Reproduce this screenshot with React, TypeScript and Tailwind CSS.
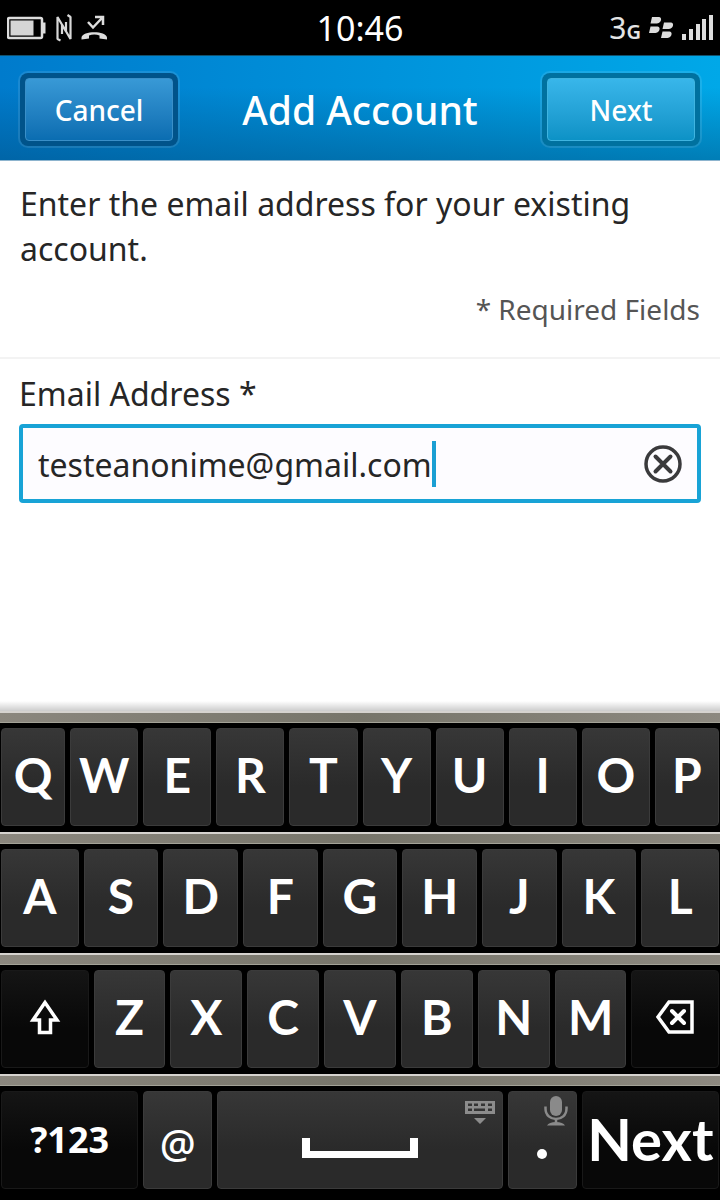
import React, { useState } from "react";
import clsx from "clsx";

const Battery = () => (
  <svg width="40" height="24" viewBox="0 0 40 24" aria-label="Battery">
    <rect x="1" y="2" width="34" height="20" rx="1.500" fill="none" stroke="#ddd" strokeWidth="2.500" />
    <rect x="3.500" y="4.500" width="23" height="15" fill="#d6d6d6" />
    <path d="M36 6.500h2.500v11H36z" fill="#ddd" />
  </svg>
);

const Nfc = () => (
  <svg width="16" height="28" viewBox="0 0 16 28" aria-label="NFC">
    <path
      d="M4.500 26.500L1.500 25V3L10 17.500V8M11.500 1L14.500 3V25L6 10.500V20"
      fill="none"
      stroke="#d8d8d8"
      strokeWidth="2.200"
      strokeLinejoin="bevel"
    />
  </svg>
);

const MissedCall = () => (
  <svg width="27" height="26" viewBox="0 0 27 26" aria-label="Missed call">
    <path d="M7 7l5 5.500L21 3M14 2h8v8" fill="none" stroke="#ddd" strokeWidth="2.500" />
    <path
      d="M.5 24.500V22.500C1.500 15.500 25 15.500 26 22.500v2L18.500 23.500v-3c-3-1.500-7.500-1.500-10.500 0v3z"
      fill="#ddd"
    />
  </svg>
);

const BlackBerry = () => (
  <svg width="25" height="24" viewBox="0 0 25 24" fill="#ddd" aria-label="BlackBerry">
    <path d="M3 1h7c3.500 0 2.500 6.500-2 6.500H1.500zM1.500 10.500h7c3.500 0 2.500 6.500-2 6.500H0zM15 6.500h7c3.500 0 2.500 6.500-2 6.500h-6.500zM13.500 15.500h7c3.500 0 2.500 6.500-2 6.500H12z" />
  </svg>
);

const Signal = () => (
  <svg width="31" height="25" viewBox="0 0 31 25" fill="#ddd" aria-label="Signal">
    <rect x="0" y="19" width="4" height="6" />
    <rect x="7" y="14" width="4" height="11" />
    <rect x="14" y="9" width="4" height="16" />
    <rect x="20" y="4" width="4" height="21" />
    <rect x="27" y="0" width="4" height="25" />
  </svg>
);

const StatusBar = () => (
  <div className="grid h-14 grid-cols-3 items-center border-b border-[#12506c] bg-black px-[7px] text-[#e4e4e4]">
    <div className="flex items-center gap-[9px]">
      <Battery />
      <Nfc />
      <MissedCall />
    </div>
    <span className="text-center text-[34px] leading-none text-white">10:46</span>
    <div className="flex items-center justify-end gap-2">
      <span className="flex items-baseline leading-none">
        <span className="text-[30px] leading-none">3</span>
        <span className="text-[20px] leading-none font-semibold">G</span>
      </span>
      <BlackBerry />
      <Signal />
    </div>
  </div>
);

const HeaderButton = ({ label, light }: { label: string; light?: boolean }) => (
  <button
    type="button"
    className={clsx(
      "w-[158px] rounded-lg p-[5px] ring-2 ring-white/10",
      light ? "bg-[#00719f]" : "bg-[#00538a]"
    )}
  >
    <span
      className={clsx(
        "flex h-[63px] items-center justify-center rounded-sm border bg-linear-to-b text-[28px] font-medium text-white",
        light
          ? "border-[#3fb4e0] from-[#38b6ea] to-[#0c92c6]"
          : "border-[#3a8fc8] from-[#3899d6] to-[#0a6db1]"
      )}
    >
      {label}
    </span>
  </button>
);

const Header = () => (
  <header className="border-b border-[#8db4ce] bg-linear-to-r from-[#007bcc] to-[#00a8e8]">
    <div className="flex h-26 items-center justify-between bg-linear-to-b from-transparent from-30% to-[#004a7a]/45 px-5 pt-1 pb-px">
      <HeaderButton label="Cancel" />
      <h1 className="pt-0.5 text-[39px] font-medium text-white">Add Account</h1>
      <HeaderButton label="Next" light />
    </div>
  </header>
);

const AccountForm = () => {
  const [email, setEmail] = useState("testeanonime@gmail.com");

  return (
    <main className="min-h-[550px] bg-white text-[#262626]">
      <div className="border-b-2 border-[#f3f3f3] px-5 pt-5 pb-[25px]">
        <p className="max-w-[640px] text-[32px] leading-[45px]">
          Enter the email address for your existing account.
        </p>
        <p className="mt-4 text-right text-[28px] leading-[45px] text-[#555]">* Required Fields</p>
      </div>
      <div className="px-[19px] pt-3">
        <label htmlFor="email" className="block text-[32px] leading-[45px]">
          Email Address *
        </label>
        <div className="mt-2 flex h-[79px] items-center rounded-sm border-4 border-[#18a3d6] bg-[#fdfcff] px-[15px]">
          <input
            id="email"
            type="email"
            value={email}
            onChange={(e) => setEmail(e.target.value)}
            className="field-sizing-content pt-0.5 text-[32px] outline-none"
          />
          <span className="h-[46px] w-1 bg-[#1b9fd3]" />
          <button type="button" aria-label="Clear" onClick={() => setEmail("")} className="ml-auto">
            <svg width="38" height="38" viewBox="0 0 38 38" fill="none" stroke="#3a3a3c">
              <circle cx="19" cy="19" r="17" strokeWidth="3.500" />
              <path d="M11.500 11.500l15 15M26.500 11.500l-15 15" strokeWidth="4" strokeLinecap="round" />
            </svg>
          </button>
        </div>
      </div>
    </main>
  );
};

type KeyProps = {
  children: React.ReactNode;
  className?: string;
  dark?: boolean;
  label?: string;
};

const Key = ({ children, className, dark, label }: KeyProps) => (
  <button
    type="button"
    aria-label={label}
    className={clsx(
      "relative flex h-[98px] min-w-0 items-center justify-center rounded-sm border bg-linear-to-b font-bold text-white",
      dark
        ? "border-[#191919] from-[#151515] to-[#080808] to-60%"
        : "border-[#3b3b3b] from-[#373737] to-[#2a2a2a] to-60%",
      className
    )}
  >
    {children}
  </button>
);

const Row = ({ children }: { children: React.ReactNode }) => (
  <div>
    <div className="h-3 border-t-2 border-b border-t-[#d6d3cf] border-b-[#a3a297] bg-linear-to-r from-[#8b877e] via-[#77756a] to-[#8d8980]" />
    <div className="flex gap-[5px] px-px pt-[5px] pb-1.5">{children}</div>
  </div>
);

const Letters = ({ keys, size }: { keys: string; size: string }) => (
  <>
    {keys.split("").map((k) => (
      <Key key={k} className={clsx("pb-1 font-['Lato',sans-serif] text-[48px]", size)}>
        {k}
      </Key>
    ))}
  </>
);

const Keyboard = () => (
  <div className="bg-black pb-1">
    <Row>
      <Letters keys="Q" size="flex-64" />
      <Letters keys="WERTYUIO" size="flex-68" />
      <Letters keys="P" size="flex-64" />
    </Row>
    <Row>
      <Letters keys="A" size="flex-77" />
      <Letters keys="SDFGHJK" size="flex-74" />
      <Letters keys="L" size="flex-77" />
    </Row>
    <Row>
      <Key dark label="Shift" className="flex-87 pb-1">
        <svg width="32" height="36" viewBox="0 0 32 36" fill="none" stroke="white" strokeWidth="3.500">
          <path d="M16 3.500L4 21h6.500v12.500h11V21H28z" />
        </svg>
      </Key>
      <Letters keys="ZXCVBNM" size="flex-71" />
      <Key dark label="Backspace" className="flex-87 pb-1">
        <svg width="40" height="36" viewBox="0 0 40 36" fill="none" stroke="white" strokeWidth="3.500">
          <path d="M14 3h23v30H14L3 18z" />
          <path d="M17 12l12 12M29 12L17 24" strokeWidth="4" strokeLinecap="round" />
        </svg>
      </Key>
    </Row>
    <Row>
      <Key dark className="flex-137 text-[36px]">
        ?123
      </Key>
      <Key className="flex-68 pt-2 text-[40px] font-medium">@</Key>
      <Key label="Space" className="flex-287">
        <svg width="116" height="20" viewBox="0 0 116 20" className="mt-4">
          <path d="M0 0h8v13h100V0h8v20H0z" fill="white" />
        </svg>
        <svg width="32" height="24" viewBox="0 0 32 24" className="absolute top-2 right-1.5">
          <path
            fill="#8c8c8c"
            fillRule="evenodd"
            d="M1 1h30v13H1zM4 3.500v2.500h4V3.500zM10 3.500v2.500h4V3.500zM17 3.500v2.500h4V3.500zM24 3.500v2.500h4V3.500zM4 8.500V11h4V8.500zM10 8.500V11h11V8.500zM24 8.500V11h4V8.500zM10 18h12l-6 6z"
          />
        </svg>
      </Key>
      <Key label="Period" className="flex-68">
        <span className="mt-7 size-[10px] rounded-full bg-white" />
        <svg width="24" height="30" viewBox="0 0 24 30" className="absolute top-1 right-2">
          <rect x="6" y="0" width="12" height="20" rx="6" fill="#8a8a8a" />
          <path d="M1.500 10.500v2c0 14 21 14 21 0v-2M12 22v5" fill="none" stroke="#8a8a8a" strokeWidth="2.500" />
          <path d="M3 29.500q2-3.500 9-3.500t9 3.500z" fill="#8a8a8a" />
        </svg>
      </Key>
      <Key dark className="flex-137 pb-1 font-['Lato',sans-serif] text-[58px]">
        Next
      </Key>
    </Row>
  </div>
);

const App = () => (
  <div className="min-h-screen bg-black font-['Noto_Sans',sans-serif]">
    <StatusBar />
    <Header />
    <div className="relative">
      <AccountForm />
      <div className="absolute inset-x-0 bottom-0 h-2.5 bg-linear-to-b from-transparent to-black/20" />
    </div>
    <Keyboard />
  </div>
);

export default App;
